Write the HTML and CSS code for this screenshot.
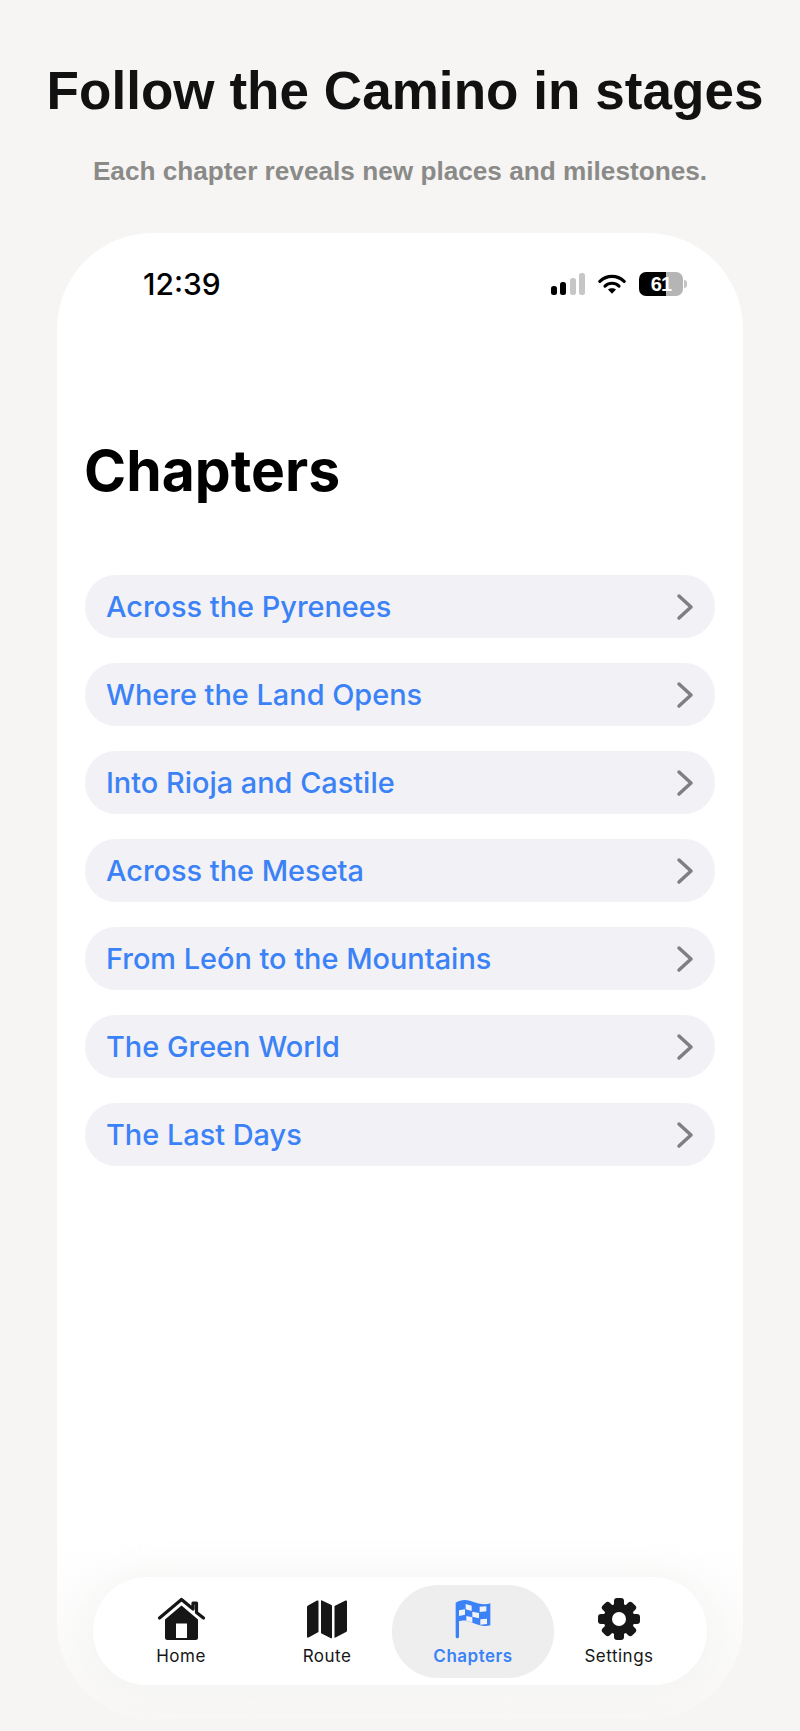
FILE: index.html
```html
<!DOCTYPE html>
<html lang="en">
<head>
<meta charset="utf-8">
<title>Chapters</title>
<link rel="stylesheet" href="styles.css">
</head>
<body>
<header class="hero">
  <h1 class="hero-title">Follow the Camino in stages</h1>
  <p class="hero-sub">Each chapter reveals new places and milestones.</p>
</header>
<main class="phone">
  <div class="status">
    <span class="time">12:39</span>
    <div class="status-icons">
      <svg width="34" height="22" viewBox="0 0 34 22"><rect x="0" y="13" width="6" height="9" rx="2.500" fill="#000"/><rect x="9" y="9" width="6" height="13" rx="2.500" fill="#000"/><rect x="19" y="5" width="6" height="17" rx="2.500" fill="#c6c6c6"/><rect x="28" y="0" width="6" height="22" rx="2.500" fill="#c6c6c6"/></svg>
      <svg width="28" height="22" viewBox="0 0 30 22"><path d="M2 8.200C9.500 1 20.500 1 28 8.200" fill="none" stroke="#000" stroke-width="3.400" stroke-linecap="round"/><path d="M7.500 13.200C11.800 9.200 18.200 9.200 22.500 13.200" fill="none" stroke="#000" stroke-width="3.400" stroke-linecap="round"/><path d="M15 21.500 10.700 17C13.200 15 16.800 15 19.300 17Z" fill="#000"/></svg>
      <div class="battery"><span class="battery-num">61</span></div>
    </div>
  </div>
  <h2 class="page-title">Chapters</h2>
  <ul class="chapters">
    <li class="chapter"><span>Across the Pyrenees</span><svg class="chev" width="18" height="28" viewBox="0 0 18 28"><path d="M3 3l12 11L3 25"/></svg></li>
    <li class="chapter"><span>Where the Land Opens</span><svg class="chev" width="18" height="28" viewBox="0 0 18 28"><path d="M3 3l12 11L3 25"/></svg></li>
    <li class="chapter"><span>Into Rioja and Castile</span><svg class="chev" width="18" height="28" viewBox="0 0 18 28"><path d="M3 3l12 11L3 25"/></svg></li>
    <li class="chapter"><span>Across the Meseta</span><svg class="chev" width="18" height="28" viewBox="0 0 18 28"><path d="M3 3l12 11L3 25"/></svg></li>
    <li class="chapter"><span>From León to the Mountains</span><svg class="chev" width="18" height="28" viewBox="0 0 18 28"><path d="M3 3l12 11L3 25"/></svg></li>
    <li class="chapter"><span>The Green World</span><svg class="chev" width="18" height="28" viewBox="0 0 18 28"><path d="M3 3l12 11L3 25"/></svg></li>
    <li class="chapter"><span>The Last Days</span><svg class="chev" width="18" height="28" viewBox="0 0 18 28"><path d="M3 3l12 11L3 25"/></svg></li>
  </ul>
  <nav class="tabbar">
    <div class="tab">
      <svg width="50" height="44" viewBox="0 0 50 44"><path d="M3.500 21 25.500 2.500 37 12V6h3.500v9.500L47.500 21" fill="none" stroke="#161616" stroke-width="3.200" stroke-linecap="round" stroke-linejoin="round"/><path fill-rule="evenodd" fill="#161616" d="M25.500 8.500 42 22.500V40.500a2.500 2.500 0 0 1-2.500 2.500H11.500a2.500 2.500 0 0 1-2.500-2.500V22.500ZM20 26.500V41h11V26.500Z"/></svg>
      <span class="tab-label">Home</span>
    </div>
    <div class="tab">
      <svg width="50" height="44" viewBox="0 0 50 44"><path fill="#161616" d="M5 10Q5 9 6 8.400L15 3.500Q16.500 3 16.500 4.500V35L6.500 40.500Q5 41 5 39.500ZM19 3.600Q19 3 20 3.400L29.500 8Q30 8.400 30 9V41Q30 41.600 29 41.200L19.500 36.600Q19 36 19 35.500ZM32.500 9 43.500 3.500Q45 3 45 4.500V33.500Q45 34.500 44 35L32.500 41Z"/></svg>
      <span class="tab-label">Route</span>
    </div>
    <div class="tab tab-active">
      <svg width="50" height="44" viewBox="-23 -7 150 132"><path fill="#3b82f6" d="M0 10C15 0 30 0 45 5 65 12 85 18 104 12V78C85 84 65 76 45 68 30 62 18 62 10 66V112a5 5 0 0 1-10 0Z"/><path fill="#f1f3f8" d="M30 14 48 19V35L30 30ZM72 22 92 21V36L72 38ZM10 33 28 30V46L10 50ZM50 37 70 41V57L50 52ZM32 50 50 54V69L32 65ZM74 60 94 58V74L74 76Z"/></svg>
      <span class="tab-label">Chapters</span>
    </div>
    <div class="tab">
      <svg width="50" height="44" viewBox="0 0 50 44">
        <g fill="#161616">
          <circle cx="25" cy="22" r="15.500"/>
          <rect x="20" y="1" width="10" height="12" rx="3"/>
          <rect x="20" y="1" width="10" height="12" rx="3" transform="rotate(45 25 22)"/>
          <rect x="20" y="1" width="10" height="12" rx="3" transform="rotate(90 25 22)"/>
          <rect x="20" y="1" width="10" height="12" rx="3" transform="rotate(135 25 22)"/>
          <rect x="20" y="1" width="10" height="12" rx="3" transform="rotate(180 25 22)"/>
          <rect x="20" y="1" width="10" height="12" rx="3" transform="rotate(225 25 22)"/>
          <rect x="20" y="1" width="10" height="12" rx="3" transform="rotate(270 25 22)"/>
          <rect x="20" y="1" width="10" height="12" rx="3" transform="rotate(315 25 22)"/>
        </g>
        <circle cx="25" cy="22" r="7" fill="#fff"/>
      </svg>
      <span class="tab-label">Settings</span>
    </div>
  </nav>
</main>
</body>
</html>
```
FILE: styles.css
```css
* { box-sizing: border-box; }
html, body { margin: 0; padding: 0; }
body {
  width: 800px;
  height: 1731px;
  overflow: hidden;
  background: #f6f5f3;
  font-family: Inter, "Liberation Sans", sans-serif;
}
.hero { text-align: center; padding-top: 60px; }
.hero-title {
  margin: 0;
  padding-left: 10px;
  font: 700 53px/62px "Liberation Sans", Arial, sans-serif;
  letter-spacing: .05px;
  color: #111;
}
.hero-sub {
  margin: 33px 0 0;
  font: 700 26.200px/32px "Liberation Sans", Arial, sans-serif;
  color: #8a8a88;
}
.phone {
  display: flex;
  flex-direction: column;
  width: 686px;
  height: 1487px;
  margin: 46px auto 0;
  padding: 0 28px 35px;
  border-radius: 96px;
  background: linear-gradient(#fff 0, #fff 1310px, #f8f7f6 1487px);
}
.status {
  display: flex;
  align-items: center;
  justify-content: space-between;
  height: 34px;
  margin-top: 34px;
  padding: 0 32px 0 58px;
}
.time { font: 500 30px/34px Inter, sans-serif; color: #000; }
.status-icons { display: flex; align-items: center; gap: 13px; }
.battery {
  position: relative;
  width: 44px;
  height: 24px;
  border-radius: 7px;
  background: linear-gradient(90deg, #000 61%, #b5b5b5 61%);
}
.battery::after {
  content: "";
  position: absolute;
  top: 8px;
  right: -4px;
  width: 3px;
  height: 8px;
  border-radius: 0 3px 3px 0;
  background: #c4c4c4;
}
.battery-num {
  display: block;
  text-align: center;
  font: 700 20px/24px "Liberation Sans", sans-serif;
  letter-spacing: -.8px;
  color: #fff;
}
.page-title {
  margin: 136px 0 0 -1px;
  font: 700 57px/68px Inter, "Liberation Sans", sans-serif;
  color: #000;
}
.chapters {
  display: flex;
  flex-direction: column;
  gap: 25px;
  margin: 70px 0 0;
  padding: 0;
  list-style: none;
}
.chapter {
  display: flex;
  align-items: center;
  justify-content: space-between;
  height: 63px;
  padding: 0 21px;
  border-radius: 31px;
  background: #f1f1f6;
  color: #3b82f6;
  font: 500 28.900px/34px Inter, sans-serif;
}
.chev { fill: none; stroke: #7f7f83; stroke-width: 3.500; stroke-linecap: round; stroke-linejoin: round; }
.tabbar {
  display: flex;
  align-items: center;
  width: 614px;
  height: 108px;
  margin: auto 0 0 8px;
  padding: 0 15px;
  border-radius: 54px;
  background: #fff;
  box-shadow: 0 0 34px 6px rgba(240, 240, 238, .55);
}
.tab {
  display: flex;
  flex-direction: column;
  align-items: center;
  gap: 5px;
  width: 146px;
  height: 93px;
  padding-top: 12px;
  font: 400 17px/20px Inter, sans-serif;
  letter-spacing: .5px;
  color: #161616;
}
.tab-active {
  width: 162px;
  margin: 0 -8px;
  border-radius: 46px;
  background: #eeeeee;
  color: #3b82f6;
  font-weight: 600;
}
```
